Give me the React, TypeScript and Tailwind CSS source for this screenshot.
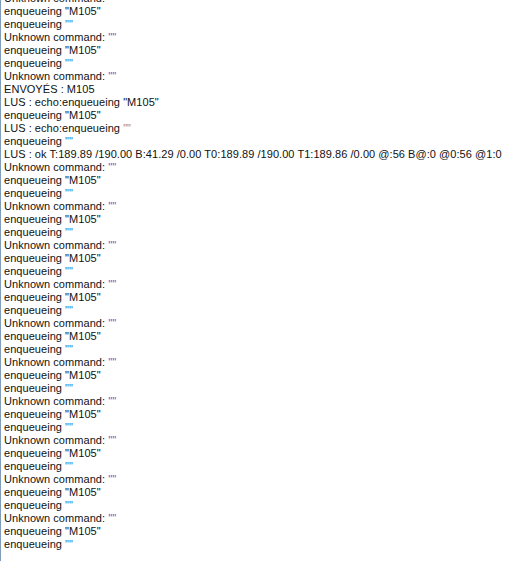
import React from "react";

type Line = { t: string; q?: "" | "M105"; orange?: boolean };

const lines: Line[] = [
  { t: "Unknown command: ", q: "" },
  { t: "enqueueing ", q: "M105" },
  { t: "enqueueing ", q: "" },
  { t: "Unknown command: ", q: "" },
  { t: "enqueueing ", q: "M105" },
  { t: "enqueueing ", q: "" },
  { t: "Unknown command: ", q: "" },
  { t: "ENVOYÉS : M105" },
  { t: "LUS : echo:enqueueing ", q: "M105" },
  { t: "enqueueing ", q: "M105" },
  { t: "LUS : echo:enqueueing ", q: "", orange: true },
  { t: "enqueueing ", q: "" },
  { t: "LUS : ok T:189.89 /190.00 B:41.29 /0.00 T0:189.89 /190.00 T1:189.86 /0.00 @:56 B@:0 @0:56 @1:0" },
];
for (let i = 0; i < 10; i++) {
  lines.push({ t: "Unknown command: ", q: "" });
  lines.push({ t: "enqueueing ", q: "M105" });
  lines.push({ t: "enqueueing ", q: "" });
}

export default function App() {
  return (
    <div className="w-[507px] h-[561px] overflow-hidden bg-white border-l border-[#7f9db9]">
      <div
        className="-mt-[8px] pl-[3px] text-[11px] leading-[13px] tracking-[0.05px] text-[#111] whitespace-nowrap"
        style={{ fontFamily: '"Liberation Sans", Arial, sans-serif' }}
      >
        {lines.map((l, i) => (
          <div key={i}>
            {l.t}
            {l.q === "" && (
              <span className={l.orange ? "text-[#c8841e]" : "text-[#2f6fd6]"}>""</span>
            )}
            {l.q === "M105" && <span>"M105"</span>}
          </div>
        ))}
      </div>
    </div>
  );
}
